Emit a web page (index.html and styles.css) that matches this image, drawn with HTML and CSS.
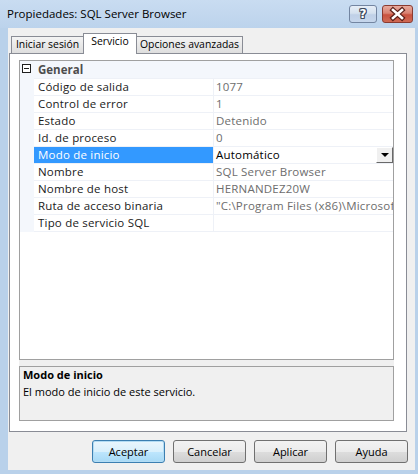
FILE: index.html
```html
<!DOCTYPE html>
<html lang="es">
<head>
<meta charset="utf-8">
<title>Propiedades: SQL Server Browser</title>
<link rel="stylesheet" href="styles.css">
</head>
<body>
<div class="window">
  <div class="titlebar">
    <span class="title">Propiedades: SQL Server Browser</span>
    <div class="caption-buttons">
      <div class="cap-btn help"><span class="help-glyph">?</span></div>
      <div class="cap-btn close">
        <svg width="29" height="16" viewBox="0 0 29 16">
          <path d="M10 4 L19 12 M19 4 L10 12" stroke="#5a1f18" stroke-width="5" stroke-linecap="square" fill="none"/>
          <path d="M10 4 L19 12 M19 4 L10 12" stroke="#ffffff" stroke-width="2.6" stroke-linecap="square" fill="none"/>
        </svg>
      </div>
    </div>
  </div>
  <div class="client">
    <div class="tabs">
      <div class="tab tab-login">Iniciar sesión</div>
      <div class="tab tab-service selected">Servicio</div>
      <div class="tab tab-advanced">Opciones avanzadas</div>
    </div>
    <div class="panel">
      <div class="propgrid">
        <div class="gridview">
          <div class="row category">
            <span class="gutter"><span class="expander"></span></span>
            <span class="cat-label">General</span>
          </div>
          <div class="row"><span class="gutter"></span><div class="cells"><span class="name">Código de salida</span><span class="value">1077</span></div></div>
          <div class="row"><span class="gutter"></span><div class="cells"><span class="name">Control de error</span><span class="value">1</span></div></div>
          <div class="row"><span class="gutter"></span><div class="cells"><span class="name">Estado</span><span class="value">Detenido</span></div></div>
          <div class="row"><span class="gutter"></span><div class="cells"><span class="name">Id. de proceso</span><span class="value">0</span></div></div>
          <div class="row"><span class="gutter"></span><div class="cells"><span class="name active">Modo de inicio</span><span class="value editable">Automático<span class="dropdown"><span class="arrow"></span></span></span></div></div>
          <div class="row"><span class="gutter"></span><div class="cells"><span class="name">Nombre</span><span class="value">SQL Server Browser</span></div></div>
          <div class="row"><span class="gutter"></span><div class="cells"><span class="name">Nombre de host</span><span class="value">HERNANDEZ20W</span></div></div>
          <div class="row"><span class="gutter"></span><div class="cells"><span class="name">Ruta de acceso binaria</span><span class="value">"C:\Program Files (x86)\Microsoft SQL Server\90\Shared\sqlbrowser.exe"</span></div></div>
          <div class="row last"><span class="gutter"></span><div class="cells"><span class="name">Tipo de servicio SQL</span><span class="value"></span></div></div>
        </div>
        <div class="desc">
          <div class="desc-title">Modo de inicio</div>
          <div class="desc-text">El modo de inicio de este servicio.</div>
        </div>
      </div>
    </div>
    <div class="buttons">
      <div class="btn default">Aceptar</div>
      <div class="btn">Cancelar</div>
      <div class="btn">Aplicar</div>
      <div class="btn">Ayuda</div>
    </div>
  </div>
</div>
</body>
</html>
```

FILE: styles.css
```css
html, body {
  margin: 0;
  padding: 0;
}

body {
  width: 418px;
  height: 474px;
  overflow: hidden;
  background: #b9d1ea;
  font-family: "Open Sans", "Noto Sans", sans-serif;
  font-size: 11px;
  color: #000;
}

.window {
  height: 474px;
  display: flex;
  flex-direction: column;
}

.titlebar {
  height: 28px;
  flex: none;
  display: flex;
  align-items: flex-start;
  padding-left: 7px;
  background: linear-gradient(to bottom, #c9dcf1 0%, #bcd3ec 100%);
}

.title {
  font-size: 11.5px;
  line-height: 16px;
  margin-top: 6px;
  color: #000;
}

.caption-buttons {
  margin-left: auto;
  margin-top: 5px;
  margin-right: 5px;
  display: flex;
  gap: 5px;
}

.cap-btn {
  height: 18px;
  box-sizing: border-box;
  border-radius: 3px;
  display: flex;
  align-items: center;
  justify-content: center;
}

.help {
  width: 28px;
  border: 1px solid #7385a1;
  background: linear-gradient(to bottom, #e7eef7 0%, #d5e1ef 45%, #bfd0e7 55%, #c6d6ec 100%);
}

.help-glyph {
  font-family: "DejaVu Sans", sans-serif;
  font-weight: bold;
  font-size: 12px;
  line-height: 14px;
  color: #ffffff;
  text-shadow: 1px 0 0 #3f4b5e, -1px 0 0 #3f4b5e, 0 1px 0 #3f4b5e, 0 -1px 0 #3f4b5e,
    1px 1px 0 #3f4b5e, -1px -1px 0 #3f4b5e, 1px -1px 0 #3f4b5e, -1px 1px 0 #3f4b5e;
}

.close {
  width: 31px;
  border: 1px solid #8a3b31;
  background: linear-gradient(to bottom, #e8aa9d 0%, #d98272 45%, #c9523f 55%, #cf6a55 100%);
}

.close svg {
  display: block;
}

.client {
  flex: 1;
  margin: 0 3px 4px 8px;
  background: #f0f0f0;
  display: flex;
  flex-direction: column;
}

/* Tabs */
.tabs {
  height: 20px;
  margin-top: 5px;
  padding-left: 3px;
  display: flex;
  align-items: flex-end;
}

.tab {
  box-sizing: border-box;
  height: 17px;
  border: 1px solid #898c95;
  border-bottom: none;
  background: linear-gradient(to bottom, #f4f4f4 0%, #e9e9e9 50%, #dedede 100%);
  font-size: 10.4px;
  line-height: 15px;
  text-align: center;
  white-space: nowrap;
}

.tab-login {
  width: 73px;
}

.tab-service {
  width: 54px;
  margin-left: -1px;
}

.tab-advanced {
  width: 107px;
  margin-left: -1px;
}

.tab.selected {
  height: 21px;
  margin-bottom: -1px;
  background: #ffffff;
  position: relative;
  z-index: 1;
}

/* Panel */
.panel {
  box-sizing: border-box;
  height: 379px;
  margin-left: 1px;
  margin-right: 8px;
  border: 1px solid #898c95;
  background: #ffffff;
  padding: 6px 12px 10px 9px;
}

.propgrid {
  height: 361px;
  display: flex;
  flex-direction: column;
  background: #f0f0f0;
}

.gridview {
  box-sizing: border-box;
  height: 300px;
  border: 1px solid #a0a0a0;
  background: #ffffff;
  font-size: 11.5px;
  letter-spacing: 0.2px;
}

.row {
  display: flex;
  height: 17px;
  line-height: 16px;
  white-space: nowrap;
}

.row.category {
  background: #f4f7fc;
}

.gutter {
  flex: none;
  width: 14px;
  background: #f4f7fc;
  position: relative;
}

.expander {
  display: block;
  box-sizing: border-box;
  width: 9px;
  height: 9px;
  margin: 3px 0 0 2px;
  border: 1px solid #1e1e1e;
  background: #ffffff;
  position: relative;
}

.expander::after {
  content: "";
  position: absolute;
  left: 1px;
  top: 3px;
  width: 5px;
  height: 1px;
  background: #1e1e1e;
}

.cat-label {
  padding-left: 4px;
  font-weight: bold;
  color: #4d4d4d;
  line-height: 17px;
  letter-spacing: 0;
}

.cells {
  flex: 1;
  display: flex;
  border-top: 1px solid #eef1f7;
  min-width: 0;
}

.row.last .cells {
  border-bottom: 1px solid #eef1f7;
}

.row.last {
  height: 18px;
}

.name {
  flex: none;
  box-sizing: border-box;
  width: 180px;
  padding-left: 4px;
  border-right: 1px solid #eef1f7;
  color: #1a1a1a;
  overflow: hidden;
}

.name.active {
  background: #3399ff;
  color: #ffffff;
  border-right-color: #eef1f7;
}

.value {
  flex: 1;
  min-width: 0;
  padding-left: 2px;
  color: #6d6d6d;
  overflow: hidden;
  display: flex;
}

.value.editable {
  color: #000000;
}

.dropdown {
  margin-left: auto;
  flex: none;
  box-sizing: border-box;
  width: 17px;
  height: 16px;
  border: 1px solid;
  border-color: #ffffff #696969 #696969 #ffffff;
  background: #f0f0f0;
  display: flex;
  align-items: center;
  justify-content: center;
}

.arrow {
  width: 0;
  height: 0;
  border-left: 4px solid transparent;
  border-right: 4px solid transparent;
  border-top: 4px solid #000000;
}

.desc {
  box-sizing: border-box;
  height: 55px;
  margin-top: 6px;
  border: 1px solid #a0a0a0;
  background: #f0f0f0;
  padding-left: 3px;
}

.desc-title {
  font-weight: bold;
  line-height: 15px;
}

.desc-text {
  margin-top: 2px;
  line-height: 15px;
}

/* Buttons */
.buttons {
  margin-top: 8px;
  padding-right: 7px;
  display: flex;
  justify-content: flex-end;
  gap: 8px;
}

.btn {
  box-sizing: border-box;
  width: 73px;
  height: 23px;
  border: 1px solid #707070;
  border-radius: 3px;
  background: linear-gradient(to bottom, #f2f2f2 0%, #ebebeb 50%, #dddddd 51%, #cfcfcf 100%);
  display: flex;
  align-items: center;
  justify-content: center;
  line-height: 15px;
}

.btn.default {
  border-color: #3c7fb1;
  box-shadow: inset 0 0 0 1px #b3dcf4;
  background: linear-gradient(to bottom, #eaf6fd 0%, #d9f0fc 50%, #bee6fd 51%, #a7d9f5 100%);
}
```
